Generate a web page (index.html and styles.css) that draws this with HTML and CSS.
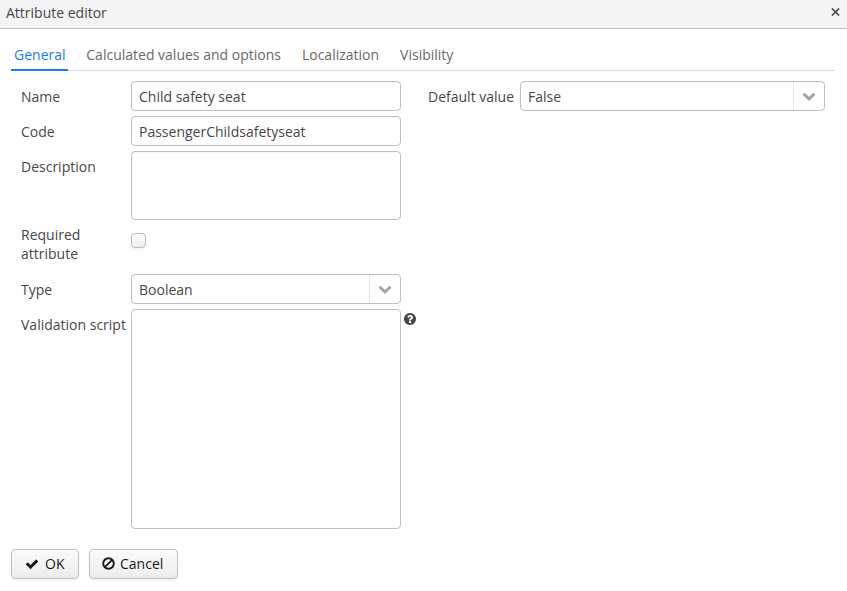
FILE: index.html
```html
<!DOCTYPE html>
<html lang="en">
<head>
<meta charset="utf-8">
<title>Attribute editor</title>
<link rel="stylesheet" href="styles.css">
</head>
<body>
<div class="window">
  <header class="header">
    <span>Attribute editor</span>
    <span class="close" role="button" aria-label="Close"><svg width="9" height="8" viewBox="0 0 9 8"><path d="M.9.5l7.200 7M8.100.5L.9 7.500" stroke="currentColor" stroke-width="1.700" fill="none"/></svg></span>
  </header>
  <main class="content">
    <nav class="tabs">
      <span class="tab active">General</span>
      <span class="tab">Calculated values and options</span>
      <span class="tab">Localization</span>
      <span class="tab">Visibility</span>
    </nav>
    <div class="columns">
      <div class="form">
        <label class="label">Name</label>
        <input class="field" type="text" value="Child safety seat">
        <label class="label">Code</label>
        <input class="field" type="text" value="PassengerChildsafetyseat">
        <label class="label">Description</label>
        <textarea class="field description"></textarea>
        <label class="label wrap">Required attribute</label>
        <span class="check"></span>
        <label class="label">Type</label>
        <div class="field select"><span>Boolean</span><span class="arrow"><svg width="14" height="14" viewBox="0 0 14 14"><path d="M1.600 4.700L7 10l5.400-5.300" stroke="currentColor" stroke-width="3" fill="none"/></svg></span></div>
        <label class="label">Validation script</label>
        <div class="script"><textarea class="field"></textarea><svg class="help" width="12" height="12" viewBox="0 128 1536 1536"><path fill="currentColor" d="M896 1376v-192q0-14-9-23t-23-9H672q-14 0-23 9t-9 23v192q0 14 9 23t23 9h192q14 0 23-9t9-23zm256-672q0-88-55.500-163T958 425t-170-41q-243 0-371 213-15 24 8 42l132 100q7 6 19 6 16 0 25-12 53-68 86-92 34-24 86-24 48 0 85.500 26t37.500 59q0 38-20 61t-68 45q-63 28-115.500 86.500T640 1020v36q0 14 9 23t23 9h192q14 0 23-9t9-23q0-19 21.500-49.500T972 957q32-18 49-28.500t46-35 44.500-48 28-60.500 12.500-81zm384 192q0 209-103 385.500T1153.500 1561 768 1664t-385.500-103T103 1281.500 0 896t103-385.500T382.500 231 768 128t385.500 103T1433 510.500 1536 896z"/></svg></div>
      </div>
      <div class="default">
        <label class="label">Default value</label>
        <div class="field select"><span>False</span><span class="arrow"><svg width="14" height="14" viewBox="0 0 14 14"><path d="M1.600 4.700L7 10l5.400-5.300" stroke="currentColor" stroke-width="3" fill="none"/></svg></span></div>
      </div>
    </div>
    <footer class="actions">
      <button class="button"><svg width="14" height="14" viewBox="0 0 1792 1792"><path fill="currentColor" d="M1671 566q0 40-28 68l-724 724-136 136q-28 28-68 28t-68-28l-136-136-362-362q-28-28-28-68t28-68l136-136q28-28 68-28t68 28l294 295 656-657q28-28 68-28t68 28l136 136q28 28 28 68z"/></svg>OK</button>
      <button class="button cancel"><svg width="13" height="13" viewBox="0 0 13 13"><circle cx="6.500" cy="6.500" r="5.300" stroke="currentColor" stroke-width="1.900" fill="none"/><path d="M2.800 10.200l7.400-7.400" stroke="currentColor" stroke-width="1.800"/></svg>Cancel</button>
    </footer>
  </main>
</div>
</body>
</html>
```
FILE: styles.css
```css
* { box-sizing: border-box; }

body {
  margin: 0;
  background: #fff;
  color: #474747;
  font: 14px/19px "Open Sans", sans-serif;
}

svg { display: block; flex: none; }

.window { height: 591px; overflow: hidden; }

.header {
  display: flex;
  justify-content: space-between;
  height: 29px;
  padding: 3px 7px 0 6px;
  background: #f4f4f4;
  border-bottom: 1px solid #c0c0c0;
}

.close { padding-top: 5px; color: #444a54; }

.content { padding: 12px 12px 0 11px; }

.tabs {
  display: flex;
  gap: 15px;
  height: 30px;
  border-bottom: 1px solid #dadada;
}

.tab {
  height: 30px;
  padding: 4px 3px 0;
  color: #696969;
}

.tab.active {
  width: 57.3px;
  color: #197de1;
  border-bottom: 2px solid #197de1;
}

.columns {
  display: flex;
  gap: 27px;
  padding: 10px 10px 0;
}

.form {
  display: grid;
  grid-template-columns: 110px 270px;
  grid-template-rows: 30px 30px 69px 44px 30px 220px;
  row-gap: 5px;
}

.label { padding-top: 6px; white-space: nowrap; }

.label.wrap { padding-top: 0; white-space: normal; padding-right: 30px; }

.field {
  width: 100%;
  height: 100%;
  margin: 0;
  padding: 0 7px;
  background: #fff;
  border: 1px solid #c0c0c0;
  border-radius: 4px;
  box-shadow: inset 0 1px 0 #f7f7f7;
  color: #474747;
  font: inherit;
  resize: none;
  outline: none;
}

textarea.field { display: block; }

.check {
  width: 15px;
  height: 15px;
  margin-top: 8px;
  border: 1px solid #bbb;
  border-radius: 4px;
  background: linear-gradient(#fafafa, #efefef);
  box-shadow: 0 2px 3px rgba(0, 0, 0, .05);
}

.select {
  display: flex;
  align-items: center;
  justify-content: space-between;
  padding-right: 0;
}

.arrow {
  display: flex;
  align-items: center;
  justify-content: center;
  width: 31px;
  height: 100%;
  border-left: 1px solid #e4e4e4;
  color: #a3a3a3;
}

.script { position: relative; }

.help { position: absolute; left: 273px; top: 4px; }

.default {
  display: grid;
  grid-template-columns: 92px 305px;
  height: 30px;
}

.actions {
  display: flex;
  gap: 10px;
  padding-top: 20px;
}

.button {
  display: flex;
  align-items: center;
  gap: 6px;
  width: 68px;
  height: 30px;
  padding: 0 0 1px 13px;
  border: 1px solid #c0c0c0;
  border-radius: 4px;
  background: linear-gradient(#fafafa, #ededed);
  box-shadow: inset 0 1px 0 #fff, inset 0 -1px 0 #e8e8e8, 0 2px 3px rgba(0, 0, 0, .05);
  color: #191919;
  font: inherit;
}

.button.cancel { gap: 5px; width: 89px; padding-left: 12px; }
```
